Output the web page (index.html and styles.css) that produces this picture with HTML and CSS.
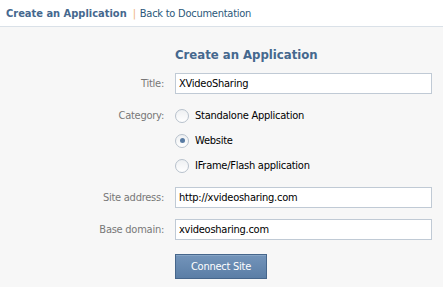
FILE: index.html
```html
<!DOCTYPE html>
<html lang="en">
<head>
<meta charset="utf-8">
<title>Create an Application</title>
<link rel="stylesheet" href="styles.css">
</head>
<body>
<header class="topbar">
  <span class="crumb-current">Create an Application</span>
  <span class="sep">|</span>
  <a class="crumb-link" href="#">Back to Documentation</a>
</header>
<main class="content">
  <h1 class="form-title">Create an Application</h1>
  <form class="form">
    <div class="row row-title">
      <label class="label">Title:</label>
      <input class="field" type="text" value="XVideoSharing">
    </div>
    <div class="row row-category">
      <span class="label label-top">Category:</span>
      <div class="options">
        <label class="option"><span class="radio"></span>Standalone Application</label>
        <label class="option"><span class="radio checked"></span>Website</label>
        <label class="option"><span class="radio"></span>IFrame/Flash application</label>
      </div>
    </div>
    <div class="row row-site">
      <label class="label">Site address:</label>
      <input class="field" type="text" value="http://xvideosharing.com">
    </div>
    <div class="row row-domain">
      <label class="label">Base domain:</label>
      <input class="field" type="text" value="xvideosharing.com">
    </div>
    <div class="row row-submit">
      <span class="label"></span>
      <button class="btn" type="button">Connect Site</button>
    </div>
  </form>
</main>
</body>
</html>
```
FILE: styles.css
```css
html, body {
  margin: 0;
  padding: 0;
}
body {
  font-family: "DejaVu Sans Condensed", "Liberation Sans", sans-serif;
  font-size: 11px;
  letter-spacing: -0.25px;
  color: #000;
  background: #f7f7f7;
  width: 443px;
  height: 287px;
  overflow: hidden;
}
.topbar {
  height: 26px;
  background: #fff;
  border-bottom: 1px solid #dae1e8;
  display: flex;
  align-items: center;
  padding-left: 6px;
  box-sizing: content-box;
}
.crumb-current {
  font-weight: bold;
  color: #45688e;
  letter-spacing: 0;
}
.sep {
  color: #f0b27a;
  margin: 0 4px 0 6px;
}
.crumb-link {
  color: #2b587a;
  text-decoration: none;
}
.content {
  padding-top: 20px;
}
.form-title {
  margin: 0 0 10px 175px;
  font-size: 13px;
  line-height: 16px;
  font-weight: bold;
  letter-spacing: 0;
  color: #45688e;
}
.form {
  margin: 0;
}
.row {
  display: flex;
  gap: 11px;
  align-items: center;
}
.label {
  width: 164px;
  flex: none;
  text-align: right;
  color: #777;
}
.label-top {
  align-self: flex-start;
  line-height: 25px;
}
.field {
  box-sizing: border-box;
  width: 257px;
  height: 21px;
  margin: 0;
  border: 1px solid #c0cad5;
  background: #fff;
  padding: 0 3px;
  font: inherit;
  letter-spacing: inherit;
  color: #000;
  outline: none;
}
.row-category { margin-top: 9px; }
.row-site { margin-top: 9px; }
.row-domain { margin-top: 11px; }
.row-submit { margin-top: 14px; }
.options {
  display: flex;
  flex-direction: column;
}
.option {
  height: 25px;
  display: flex;
  align-items: center;
  gap: 6px;
  color: #000;
}
.radio {
  width: 12px;
  height: 12px;
  border: 1px solid #b7c1cc;
  border-radius: 50%;
  background: linear-gradient(#eef0f2, #ffffff);
  display: flex;
  align-items: center;
  justify-content: center;
  flex: none;
}
.radio.checked::after {
  content: "";
  width: 5px;
  height: 5px;
  border-radius: 50%;
  background: #587ba3;
}
.btn {
  box-sizing: border-box;
  width: 92px;
  height: 25px;
  border: 1px solid #46668b;
  background: linear-gradient(#7394ba, #5b7ea6);
  box-shadow: inset 0 1px 0 #87a5c6;
  color: #fff;
  font: inherit;
  letter-spacing: inherit;
  padding: 0;
}
```
